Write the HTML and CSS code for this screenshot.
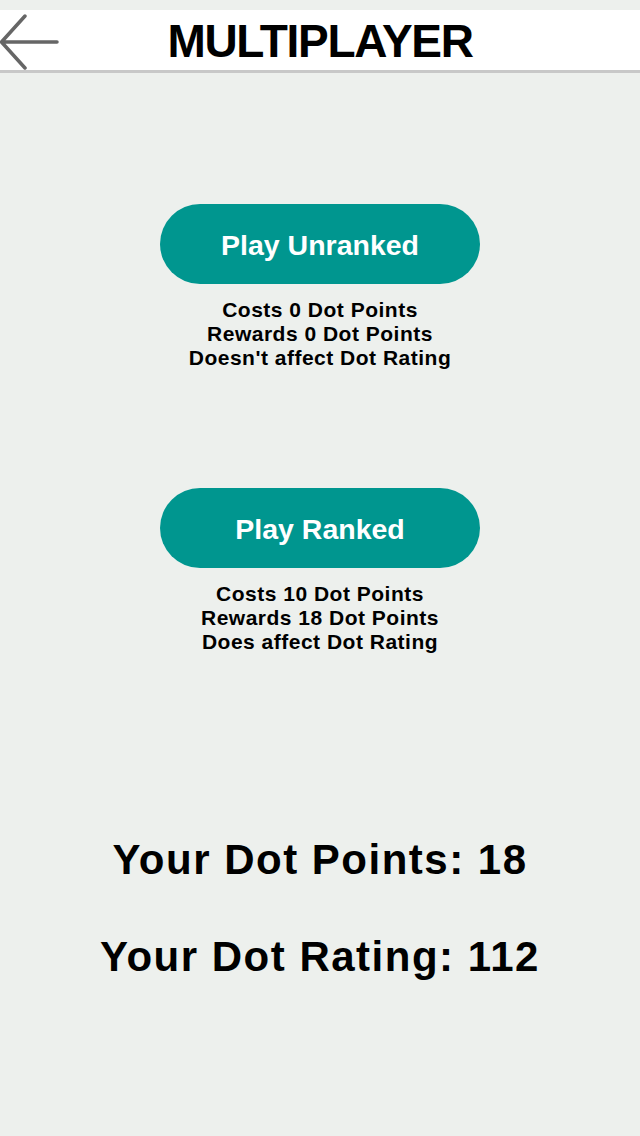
FILE: index.html
```html
<!DOCTYPE html>
<html>
<head>
<meta charset="utf-8">
<link rel="stylesheet" href="styles.css">
</head>
<body>
<header class="topbar">
  <svg class="back" width="60" height="60" viewBox="0 0 60 60">
    <path d="M25 6 L1.5 32 L25 58 M1.5 32 L57 32" fill="none" stroke="#666" stroke-width="3.5" stroke-linecap="round" stroke-linejoin="round"/>
  </svg>
  <h1 class="title">MULTIPLAYER</h1>
  <div></div>
</header>
<main class="content">
  <section class="mode first">
    <button class="play">Play Unranked</button>
    <div class="desc">
      <div>Costs 0 Dot Points</div>
      <div>Rewards 0 Dot Points</div>
      <div>Doesn't affect Dot Rating</div>
    </div>
  </section>
  <section class="mode second">
    <button class="play">Play Ranked</button>
    <div class="desc">
      <div>Costs 10 Dot Points</div>
      <div>Rewards 18 Dot Points</div>
      <div>Does affect Dot Rating</div>
    </div>
  </section>
  <div class="stat points">Your Dot Points: 18</div>
  <div class="stat rating">Your Dot Rating: 112</div>
</main>
</body>
</html>
```
FILE: styles.css
```css
html, body {
  margin: 0;
  padding: 0;
}
body {
  background: #edf0ed;
  font-family: "Liberation Sans", Arial, sans-serif;
  color: #000;
  width: 640px;
  height: 1136px;
  overflow: hidden;
}
.topbar {
  margin-top: 10px;
  height: 60px;
  background: #fff;
  border-bottom: 3px solid #c8c8c8;
  display: grid;
  grid-template-columns: 60px 1fr 60px;
  align-items: center;
}
.back {
  display: block;
}
.title {
  margin: 0;
  padding-top: 3px;
  text-align: center;
  font-size: 46px;
  font-weight: bold;
  letter-spacing: -1.3px;
  line-height: 57px;
}
.content {
  display: flex;
  flex-direction: column;
  align-items: center;
}
.mode {
  display: flex;
  flex-direction: column;
  align-items: center;
}
.first {
  margin-top: 131px;
}
.second {
  margin-top: 118px;
}
.play {
  width: 320px;
  height: 80px;
  border: none;
  border-radius: 40px;
  background: #00968f;
  color: #fff;
  font-family: "Liberation Sans", Arial, sans-serif;
  font-weight: bold;
  font-size: 28.5px;
  padding: 2px 0 0;
}
.desc {
  margin-top: 14px;
  text-align: center;
  font-size: 21px;
  font-weight: bold;
  line-height: 24px;
  letter-spacing: 0.5px;
}
.stat {
  font-size: 42px;
  font-weight: bold;
  letter-spacing: 1.5px;
  line-height: 60px;
  text-align: center;
}
.points {
  margin-top: 176px;
}
.rating {
  margin-top: 37px;
}
```
